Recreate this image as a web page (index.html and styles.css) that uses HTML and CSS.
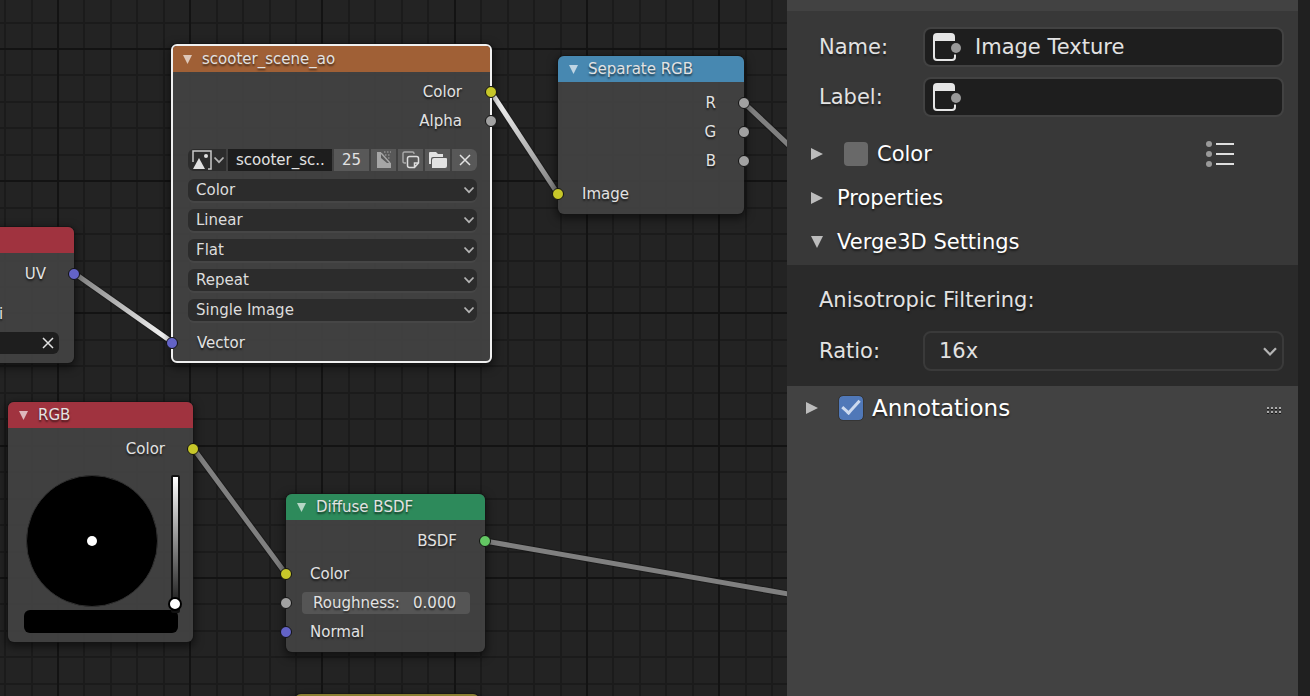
FILE: index.html
```html
<!DOCTYPE html>
<html lang="en">
<head>
<meta charset="utf-8">
<title>Node Editor</title>
<link rel="stylesheet" href="styles.css">
</head>
<body>
<svg class="defs" aria-hidden="true">
  <symbol id="chevron" viewBox="0 0 12 8"><path d="M1.5 1.5 6 6.2 10.500 1.500" fill="none" stroke="currentColor" stroke-width="1.700"/></symbol>
  <symbol id="cross" viewBox="0 0 14 14"><path d="M2 2 12 12M12 2 2 12" fill="none" stroke="currentColor" stroke-width="1.500"/></symbol>
  <symbol id="down" viewBox="0 0 10 10"><path d="M0 0H10L5 10Z" fill="currentColor"/></symbol>
  <symbol id="right" viewBox="0 0 12 12"><path d="M0 0 12 6 0 12Z" fill="currentColor"/></symbol>
  <symbol id="node" viewBox="0 0 28 28">
    <path d="M1 8V24Q1 27 4 27H19Q22 27 22 24V21.500" fill="none" stroke="#e6e6e6" stroke-width="2"/>
    <path d="M0 8V4Q0 0 4 0H18Q22 0 22 4V8Z" fill="#e6e6e6"/>
    <circle cx="23" cy="15" r="5" fill="#999"/>
  </symbol>
</svg>
<main class="editor">
  <section class="canvas" aria-label="Node graph">
    <svg class="backdrop" aria-hidden="true">
      <defs>
        <pattern id="grid" x="58" y="49" width="529" height="529" patternUnits="userSpaceOnUse">
          <g stroke="#1b1b1b" stroke-width="2">
            <path d="M26 0V529M53 0V529M79 0V529M106 0V529M159 0V529M185 0V529M212 0V529M238 0V529M291 0V529M317 0V529M344 0V529M370 0V529M423 0V529M450 0V529M476 0V529M503 0V529"/>
            <path d="M0 26H529M0 53H529M0 79H529M0 106H529M0 159H529M0 185H529M0 212H529M0 238H529M0 291H529M0 317H529M0 344H529M0 370H529M0 423H529M0 450H529M0 476H529M0 503H529"/>
          </g>
          <path d="M0 0V529M529 0V529M132 0V529M264 0V529M397 0V529M0 0H529M0 529H529M0 132H529M0 264H529M0 397H529" stroke="#131313" stroke-width="2"/>
        </pattern>
        <linearGradient id="fadeIn" gradientUnits="userSpaceOnUse" x1="74" y1="273" x2="172" y2="343"><stop offset="0" stop-color="#7c7c7c"/><stop offset="1" stop-color="#fff"/></linearGradient>
        <linearGradient id="fadeOut" gradientUnits="userSpaceOnUse" x1="491" y1="91" x2="558" y2="194"><stop offset="0" stop-color="#fff"/><stop offset="1" stop-color="#7c7c7c"/></linearGradient>
      </defs>
      <rect width="100%" height="100%" fill="url(#grid)"/>
      <g class="links">
        <g class="link-edge"><path d="M74 273 172 342M491 92 558 194M743 102 813 168M193 448 286 574M485 541 823 600"/></g>
        <path d="M74 273 172 342" stroke="url(#fadeIn)"/>
        <path d="M491 92 558 194" stroke="url(#fadeOut)"/>
        <path d="M743 102 813 168M193 448 286 574M485 541 823 600" stroke="#808080"/>
      </g>
    </svg>

    <article class="node node-uv">
      <header class="node-head red"></header>
      <div class="node-body">
        <div class="row out">UV<i class="socket violet"></i></div>
        <div class="row clipped">i</div>
        <div class="uv-field"><button aria-label="Clear"><svg class="ic14"><use href="#cross"/></svg></button></div>
      </div>
    </article>

    <article class="node node-image selected">
      <header class="node-head orange"><svg class="tri"><use href="#down"/></svg>scooter_scene_ao</header>
      <div class="node-body">
        <div class="row out">Color<i class="socket yellow"></i></div>
        <div class="row out">Alpha<i class="socket gray"></i></div>
        <div class="fields">
          <div class="datablock">
            <button class="pick" aria-label="Browse image">
              <svg class="ic20" viewBox="0 0 20 20"><path d="M1 12V1H19V19H16" fill="none" stroke="#c8c8c8" stroke-width="1.500"/><path d="M1 19 7 8 13 19Z" fill="#e0e0e0"/><circle cx="14" cy="6" r="2" fill="#e0e0e0"/></svg>
              <svg class="chev"><use href="#chevron"/></svg>
            </button>
            <input class="name" aria-label="Image name" value="scooter_sc..">
            <button class="users">25</button>
            <button aria-label="Fake user"><svg class="ic18" viewBox="0 0 18 18"><path d="M2 1H6V7L12 12H16V17H2Z" fill="#a6a6a6"/><path d="M6 2 15 12" stroke="#a6a6a6" stroke-width="1.500"/><path d="M9 1H16M10 4H16M13 7H16" stroke="#8c8c8c" stroke-width="1.500" stroke-dasharray="1.500 1.500"/></svg></button>
            <button aria-label="Duplicate"><svg class="ic18" viewBox="0 0 18 18"><path d="M4 12H2.500Q1 12 1 10.500V2.500Q1 1 2.500 1H10.500Q12 1 12 2.500V3" fill="none" stroke="#aaa" stroke-width="1.400"/><path d="M7.500 5.500H14.500Q16.500 5.500 16.500 7.500V12L12.500 16.500H7.500Q5.500 16.500 5.500 14.500V7.500Q5.500 5.500 7.500 5.500ZM16 12H12.500V16" fill="none" stroke="#ddd" stroke-width="1.500"/></svg></button>
            <button aria-label="Open image"><svg class="ic20" viewBox="0 0 20 20"><path d="M1 14V3Q1 2 2 2H8L10 4H15V7H5Q3 7 3 9V14Z" fill="#e2e2e2"/><path d="M4 18V10Q4 8 6 8H18Q19 8 19 9V16Q19 18 17 18Z" fill="#e2e2e2"/></svg></button>
            <button class="last" aria-label="Unlink"><svg class="ic14"><use href="#cross"/></svg></button>
          </div>
          <div class="drop"><select aria-label="Color output"><option>Color</option></select><svg class="chev"><use href="#chevron"/></svg></div>
          <div class="drop"><select aria-label="Interpolation"><option>Linear</option></select><svg class="chev"><use href="#chevron"/></svg></div>
          <div class="drop"><select aria-label="Projection"><option>Flat</option></select><svg class="chev"><use href="#chevron"/></svg></div>
          <div class="drop"><select aria-label="Extension"><option>Repeat</option></select><svg class="chev"><use href="#chevron"/></svg></div>
          <div class="drop"><select aria-label="Source"><option>Single Image</option></select><svg class="chev"><use href="#chevron"/></svg></div>
        </div>
        <div class="row in">Vector<i class="socket violet"></i></div>
      </div>
    </article>

    <article class="node node-separate">
      <header class="node-head blue"><svg class="tri"><use href="#down"/></svg>Separate RGB</header>
      <div class="node-body">
        <div class="row out">R<i class="socket gray"></i></div>
        <div class="row out">G<i class="socket gray"></i></div>
        <div class="row out">B<i class="socket gray"></i></div>
        <div class="row in spaced">Image<i class="socket yellow"></i></div>
      </div>
    </article>

    <article class="node node-rgb">
      <header class="node-head red"><svg class="tri"><use href="#down"/></svg>RGB</header>
      <div class="node-body">
        <div class="row out">Color<i class="socket yellow"></i></div>
        <div class="picker">
          <svg class="wheel" viewBox="0 0 132 132" role="img" aria-label="Color wheel"><circle cx="66" cy="66" r="65.500" fill="#000" stroke="#303030"/><circle cx="66" cy="66" r="5" fill="#fff"/></svg>
          <input class="value" type="range" min="0" max="1" step="0.01" value="0" aria-label="Value">
        </div>
        <button class="swatch" aria-label="Current color"></button>
      </div>
    </article>

    <article class="node node-diffuse">
      <header class="node-head green"><svg class="tri"><use href="#down"/></svg>Diffuse BSDF</header>
      <div class="node-body">
        <div class="row out">BSDF<i class="socket lime"></i></div>
        <div class="row in spaced">Color<i class="socket yellow"></i></div>
        <div class="row"><label class="number">Roughness:<input value="0.000"></label><i class="socket gray left"></i></div>
        <div class="row in">Normal<i class="socket violet"></i></div>
      </div>
    </article>

    <article class="node node-next"><header class="node-head olive"></header></article>
  </section>

  <aside class="sidebar">
    <section class="panel">
      <div class="props">
        <label for="name">Name:</label>
        <div class="text"><svg class="ic28"><use href="#node"/></svg><input id="name" value="Image Texture"></div>
        <label for="label">Label:</label>
        <div class="text"><svg class="ic28"><use href="#node"/></svg><input id="label" value=""></div>
      </div>
      <div class="sub">
        <button class="toggle" aria-label="Expand Color"><svg class="ic12"><use href="#right"/></svg></button>
        <label class="check"><input type="checkbox">Color</label>
        <button class="presets" aria-label="Presets"><svg viewBox="0 0 28 26"><g fill="#999"><circle cx="3" cy="3" r="3"/><circle cx="3" cy="13" r="3"/><circle cx="3" cy="23" r="3"/></g><path d="M10 3H28M10 13H28M10 23H28" stroke="#dedede" stroke-width="2"/></svg></button>
      </div>
      <div class="sub"><button class="toggle"><svg class="ic12"><use href="#right"/></svg>Properties</button></div>
      <div class="sub"><button class="toggle"><svg class="ic12"><use href="#down"/></svg>Verge3D Settings</button></div>
      <div class="settings">
        <p>Anisotropic Filtering:</p>
        <label for="ratio">Ratio:</label>
        <div class="ratio"><select id="ratio"><option>16x</option></select><svg class="chev"><use href="#chevron"/></svg></div>
      </div>
    </section>
    <section class="annotations">
      <button class="toggle" aria-label="Expand Annotations"><svg class="ic12"><use href="#right"/></svg></button>
      <label class="check"><input type="checkbox" checked>Annotations</label>
      <svg class="grip" viewBox="0 0 14 7" aria-hidden="true"><path d="M0 1H14M0 5H14" stroke="#aaa" stroke-width="2" stroke-dasharray="2 2"/><path d="M0 2.500H14M0 6.500H14" stroke="#151515" stroke-dasharray="2 2"/></svg>
    </section>
  </aside>
</main>
</body>
</html>
```
FILE: styles.css
```css
* { box-sizing: border-box; }
body {
  margin: 0;
  background: #232323;
  color: #e2e2e2;
  font: 15px/20px "DejaVu Sans", sans-serif;
}
button, input, select {
  margin: 0;
  padding: 0;
  border: 0;
  background: none;
  color: inherit;
  font: inherit;
  appearance: none;
}
input, select { min-width: 0; }
p { margin: 0; }
svg { display: block; flex: none; }
.defs { position: absolute; width: 0; height: 0; }
.ic12 { width: 12px; height: 12px; }
.ic14 { width: 14px; height: 14px; }
.ic18 { width: 18px; height: 18px; }
.ic20 { width: 20px; height: 20px; }
.ic28 { width: 28px; height: 28px; }

.editor { display: flex; height: 100vh; overflow: hidden; }
.canvas { position: relative; flex: 1; overflow: hidden; }
.backdrop { position: absolute; inset: 0; width: 100%; height: 100%; }
.links path { fill: none; stroke-width: 5px; }
.links .link-edge path { stroke: #161616; stroke-opacity: 0.6; stroke-width: 7px; }

.node {
  position: absolute;
  border-radius: 6px;
  background: rgba(66, 66, 66, 0.94);
  box-shadow: 0 0 0 1px rgba(20, 20, 20, 0.6), 0 3px 8px 2px rgba(0, 0, 0, 0.5);
  text-shadow: 0 2px 2px rgba(0, 0, 0, 0.6);
}
.node.selected { border: 2px solid #f0f0f0; }
.node-uv { left: -120px; top: 227px; width: 194px; }
.node-image { left: 171px; top: 44px; width: 321px; }
.node-separate { left: 558px; top: 56px; width: 186px; }
.node-rgb { left: 8px; top: 402px; width: 185px; }
.node-diffuse { left: 286px; top: 494px; width: 199px; }
.node-next { left: 295px; top: 694px; width: 184px; }
.node-head {
  display: flex;
  align-items: center;
  gap: 10px;
  height: 26px;
  padding-left: 11px;
  border-radius: 6px 6px 0 0;
}
.tri { width: 9px; height: 9px; color: rgba(255, 255, 255, 0.65); }
.red { background: #a0333f; }
.orange { background: #a06036; }
.selected .orange { padding-left: 10px; border-radius: 4px 4px 0 0; }
.blue { background: #4788b1; }
.green { background: #2d8a5b; }
.olive { background: #8a7f32; }
.node-body { padding: 6px 0; }
.selected .node-body { padding: 5px 0 4px; }
.row {
  position: relative;
  display: flex;
  align-items: center;
  height: 29px;
}
.out { justify-content: flex-end; padding-right: 28px; }
.in { padding-left: 24px; }
.spaced { margin-top: 4px; }
.socket {
  position: absolute;
  right: -6px;
  width: 12px;
  height: 12px;
  border: 1px solid #111;
  border-radius: 50%;
}
.in .socket, .socket.left { right: auto; left: -6px; }
.selected .socket { right: -7px; }
.selected .in .socket { right: auto; left: -7px; }
.yellow { background: #c7c729; }
.gray { background: #a1a1a1; }
.violet { background: #6363c7; }
.lime { background: #63c763; }

.clipped { padding-left: 119px; margin-top: 11px; }
.uv-field {
  display: flex;
  justify-content: flex-end;
  align-items: center;
  height: 22px;
  margin: 4px 15px 3px 20px;
  padding-right: 4px;
  border-radius: 6px;
  background: #1e1e1e;
}

.fields {
  display: flex;
  flex-direction: column;
  gap: 8px;
  padding: 14px 13px 7px 15px;
}
.datablock { display: flex; gap: 2px; height: 22px; }
.datablock button {
  display: flex;
  align-items: center;
  justify-content: center;
  width: 25px;
  background: #585858;
  text-shadow: none;
}
.datablock .pick { width: 38px; gap: 1px; padding-left: 2px; border-radius: 6px 0 0 6px; background: #2c2c2c; }
.datablock .name { flex: 1; padding-left: 8px; background: #1d1d1d; text-shadow: none; }
.datablock .users { width: 35px; }
.datablock .last { border-radius: 0 6px 6px 0; }
.chev { width: 12px; height: 8px; color: #b4b4b4; }
.drop { display: flex; align-items: center; height: 22px; padding-right: 2px; border-radius: 6px; background: #2c2c2c; box-shadow: 0 2px 0 rgba(85, 85, 85, 0.3); }
.drop select { flex: 1; padding-left: 8px; color: #dcdcdc; text-shadow: none; }

.picker { display: flex; align-items: flex-start; gap: 10px; padding: 12px 0 0 18px; }
.wheel { width: 132px; height: 132px; }
.value {
  writing-mode: vertical-lr;
  direction: rtl;
  width: 14px;
  height: 138px;
}
.value::-webkit-slider-runnable-track {
  width: 9px;
  margin: 0 auto;
  border: 2px solid #111;
  border-radius: 2px;
  background: linear-gradient(#fff, #111);
}
.value::-webkit-slider-thumb {
  appearance: none;
  width: 14px;
  height: 14px;
  margin: 0 -5px;
  border: 2px solid #000;
  border-radius: 50%;
  background: #fff;
}
.swatch { display: block; width: 154px; height: 23px; margin: -3px 0 3px 16px; border-radius: 6px; background: #000; }
.number {
  display: flex;
  flex: 1;
  align-items: center;
  justify-content: space-between;
  height: 22px;
  margin: 0 15px 0 16px;
  padding: 0 14px 0 11px;
  border-radius: 4px;
  background: #555;
}
.number input { width: 45px; text-align: right; text-shadow: inherit; }

.sidebar {
  width: 523px;
  padding-top: 11px;
  border-right: 12px solid #202020;
  background: #424242;
  font-size: 21px;
  line-height: 28px;
  text-shadow: 0 2px 2px rgba(0, 0, 0, 0.5);
}
.panel { background: #383838; }
.props, .settings {
  display: grid;
  grid-template-columns: 104px 1fr;
  align-items: center;
  gap: 10px 0;
  padding: 16px 14px 14px 32px;
}
.text, .ratio {
  display: flex;
  align-items: center;
  height: 40px;
  border: 2px solid #424242;
  border-radius: 8px;
  background: #1e1e1e;
  text-shadow: none;
}
.text { gap: 14px; padding-left: 8px; }
.text input { flex: 1; }
.sub { display: flex; align-items: center; height: 44px; padding: 2px 0 0 24px; color: #fff; }
.toggle { display: flex; align-items: center; gap: 14px; text-shadow: inherit; }
.toggle svg { color: #bcbcbc; }
.check { display: flex; align-items: center; gap: 9px; }
.check input { position: relative; width: 24px; height: 24px; border-radius: 4px; background: #696969; }
.sub .check { margin-left: 21px; }
.check input:checked { background: #5078b8; outline: 1px solid #353535; }
.check input:checked::after {
  content: "";
  position: absolute;
  left: 7px;
  top: 0;
  width: 7px;
  height: 15px;
  border: solid #cddaef;
  border-width: 0 3px 3px 0;
  transform: rotate(42deg);
}
.presets { margin-left: auto; margin-right: 64px; }
.presets svg { width: 28px; height: 26px; }
.settings { margin-top: 2px; padding: 20px 14px 15px 32px; background: #2a2a2a; row-gap: 16px; }
.settings p { grid-column: 1 / -1; line-height: 30px; }
.ratio { padding-right: 4px; border-color: #3a3a3a; background: #2b2b2b; }
.ratio select { flex: 1; padding-left: 14px; }
.ratio .chev { width: 16px; height: 11px; }
.annotations { display: flex; align-items: center; height: 44px; padding: 0 17px 0 19px; color: #fff; font-size: 23px; }
.annotations .check { margin-left: 21px; }
.grip { width: 14px; height: 7px; margin-left: auto; margin-top: 4px; }
```
